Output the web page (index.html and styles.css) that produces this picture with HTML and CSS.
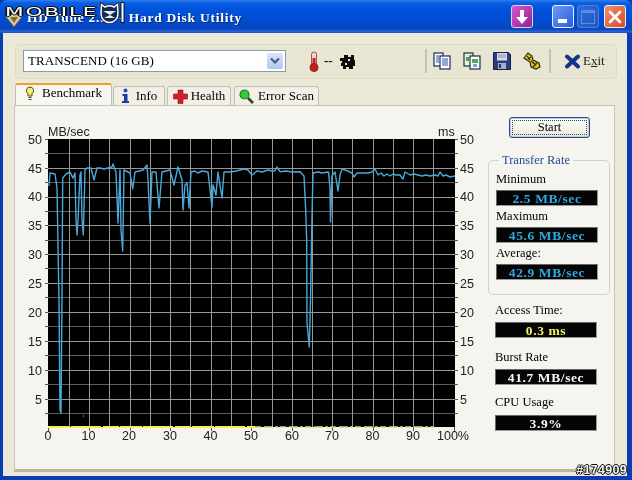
FILE: index.html
```html
<!DOCTYPE html>
<html lang="en">
<head>
<meta charset="utf-8">
<title>HD Tune</title>
<link rel="stylesheet" href="styles.css">
</head>
<body>
<div class="window">
  <header class="titlebar">
    <svg class="app-icon" width="18" height="16" viewBox="0 0 18 16"><path d="M1 5 9 1l8 4-8 10z" fill="#d8c8a0" stroke="#6a5a40"/><path d="M5 5h8l-4 6z" fill="#8a6a3a"/></svg>
    <span class="title-text">HD Tune 2.55 - Hard Disk Utility</span>
    <button class="tb-btn tb-pink"><svg width="18" height="18" viewBox="0 0 18 18"><path d="M7 2h4v7h4l-6 7-6-7h4z" fill="#fff"/></svg></button>
    <button class="tb-btn tb-min"><span class="min-dash"></span></button>
    <button class="tb-btn tb-max"><span class="max-box"></span></button>
    <button class="tb-btn tb-close"><svg width="14" height="14" viewBox="0 0 14 14"><path d="M2 2l10 10M12 2 2 12" stroke="#fff" stroke-width="2.6" stroke-linecap="round"/></svg></button>
  </header>

  <main class="client">
    <div class="toolbar">
      <div class="combo"><span class="combo-text">TRANSCEND (16 GB)</span><span class="combo-arrow"><svg width="10" height="8" viewBox="0 0 10 8"><path d="M1 1.5 5 5.5 9 1.5" fill="none" stroke="#3a5a8c" stroke-width="2"/></svg></span></div>
      <svg class="i-thermo" width="10" height="21" viewBox="0 0 10 21"><rect x="2.5" y="1" width="5" height="15" rx="2.5" fill="#f0d8d0" stroke="#a05050"/><rect x="3.5" y="7" width="3" height="9" fill="#c82020"/><circle cx="5" cy="16.5" r="4" fill="#c82020" stroke="#802020"/></svg>
      <span class="temp">--</span>
      <svg class="i-plug" width="15" height="15" viewBox="0 0 15 15"><path d="M0 4h4V1h4v2h3V1h3v5h1v6h-2v3H9v-2H6v2H3v-3H1V9h1V7H0z" fill="#0c0c0c"/><path d="M8 5h2v2H8zM5 9h2v2H5z" fill="#e8e8e0"/></svg>
      <span class="sep sep-a"></span>
      <svg class="i-tool i-first" width="18" height="18" viewBox="0 0 18 18"><rect x="1" y="1" width="9" height="13" fill="#fff" stroke="#1c2c58" stroke-width="1.200"/><rect x="7" y="4" width="10" height="13" fill="#fff" stroke="#1c2c58" stroke-width="1.200"/><path d="M3 4h3M3 6h3M3 8h3M3 10h3M9 7h6M9 9h6M9 11h6M9 13h6" stroke="#2a50a0"/></svg>
      <svg class="i-tool" width="18" height="18" viewBox="0 0 18 18"><rect x="1" y="1" width="9" height="13" fill="#e8f0e0" stroke="#1c2c40" stroke-width="1.200"/><rect x="7" y="4" width="10" height="13" fill="#fff" stroke="#1c2c40" stroke-width="1.200"/><path d="M3 5h3v4H3z" fill="#40a848"/><path d="M9 7h6v4H9z" fill="#48b048"/><path d="M10 12h4v3h-4z" fill="#70a8d0"/></svg>
      <svg class="i-tool" width="18" height="18" viewBox="0 0 18 18"><path d="M0.500 0.500h15l2 2v15H.500z" fill="#2c3c84" stroke="#141e50"/><rect x="4" y="1" width="10" height="7.500" fill="#d8dce8"/><path d="M5 3h8M5 5h8" stroke="#8a90a8"/><rect x="5" y="11" width="8" height="6" fill="#a8b0c0"/><rect x="6" y="12" width="2" height="4" fill="#28346c"/></svg>
      <svg class="i-tool" width="18" height="18" viewBox="0 0 18 18"><path d="M1 6 5 1l4 3 1 4 6 3 1 4-4 2-5-2-1-5z" fill="#d8c228" stroke="#2e2a10" stroke-width="1.200"/><path d="M4 4l3 4M8 9l5 4M5 7l3-2M10 15l4-4" stroke="#2e2a10" stroke-width="1.200"/></svg>
      <span class="sep sep-b"></span>
      <svg class="i-x" width="15" height="15" viewBox="0 0 15 15"><path d="M2 2.500l11 10M13 2.500l-11 10" stroke="#14348c" stroke-width="4" stroke-linecap="round"/></svg>
      <span class="exit">E<u>x</u>it</span>
    </div>

    <nav class="tabs">
      <div class="tab tab-active tab-bench"><svg width="10" height="15" viewBox="0 0 10 15"><path d="M5 1a3.600 3.600 0 0 1 2 6.600V10H3V7.600A3.600 3.600 0 0 1 5 1z" fill="#f4ec70" stroke="#4a4a20"/><path d="M3.500 11.500h3M3.500 13.500h3" stroke="#4a4a20" stroke-width="1.200"/></svg><span>Benchmark</span></div>
      <div class="tab tab-info"><svg width="9" height="16" viewBox="0 0 9 16"><circle cx="4.500" cy="2.500" r="2" fill="#2048b0"/><path d="M1.500 6h5v7h1.500v2H1v-2h2V8H1.500z" fill="#1c3ca8"/></svg><span>Info</span></div>
      <div class="tab tab-health"><svg width="15" height="15" viewBox="0 0 15 15"><path d="M5 1h5v4h4.500v5H10v4.500H5V10H.5V5H5z" fill="#d81c2c" stroke="#801018" stroke-width=".6"/></svg><span>Health</span></div>
      <div class="tab tab-scan"><svg width="15" height="15" viewBox="0 0 15 15"><circle cx="5.500" cy="5.500" r="4.500" fill="#38c838" stroke="#1c7c24" stroke-width="1.200"/><path d="M9 9l5 5" stroke="#38461c" stroke-width="2.600"/></svg><span>Error Scan</span></div>
    </nav>

    <section class="panel">
      <svg class="chart" width="473" height="342" viewBox="15 105 473 342">
        <rect x="48" y="139" width="407" height="288" fill="#000"/>
        <path class="grid-minor" d="M48 153.500H455M48 182.500H455M48 211.500H455M48 240.500H455M48 268.500H455M48 297.500H455M48 326.500H455M48 355.500H455M48 384.500H455M48 413.500H455"/>
        <path class="grid-major" d="M48 168.500H455M48 197.500H455M48 225.500H455M48 254.500H455M48 283.500H455M48 312.500H455M48 341.500H455M48 370.500H455M48 399.500H455"/>
        <path class="grid-major" d="M69.500 139V427M89.500 139V427M109.500 139V427M130.500 139V427M150.500 139V427M170.500 139V427M190.500 139V427M211.500 139V427M231.500 139V427M251.500 139V427M272.500 139V427M292.500 139V427M312.500 139V427M332.500 139V427M352.500 139V427M373.500 139V427M393.500 139V427M413.500 139V427M433.500 139V427"/>
        <path class="ticks" d="M45 139.500H48M45 153.500H48M45 168.500H48M45 182.500H48M45 197.500H48M45 211.500H48M45 225.500H48M45 240.500H48M45 254.500H48M45 268.500H48M45 283.500H48M45 297.500H48M45 312.500H48M45 326.500H48M45 341.500H48M45 355.500H48M45 370.500H48M45 384.500H48M45 399.500H48M45 413.500H48M455 139.500H458M455 153.500H458M455 168.500H458M455 182.500H458M455 197.500H458M455 211.500H458M455 225.500H458M455 240.500H458M455 254.500H458M455 268.500H458M455 283.500H458M455 297.500H458M455 312.500H458M455 326.500H458M455 341.500H458M455 355.500H458M455 370.500H458M455 384.500H458M455 399.500H458M455 413.500H458M48.500 427V431M89.500 427V431M130.500 427V431M170.500 427V431M211.500 427V431M251.500 427V431M292.500 427V431M332.500 427V431M373.500 427V431M413.500 427V431M454.500 427V431"/>
        <path class="yl-a" d="M48 427H255"/>
        <path class="yl-b" d="M255 427H434"/>
        <circle cx="83.500" cy="416" r=".7" fill="#aaa"/>
        <polyline class="curve" points="49,186 50,173 55,174 57,188 58,247 59,300 59.500,355 60,410 61,413 62,300 62.700,178 66,174 70,172 73,178 75,173 76,220 77,235 78,220 80,175 81,172 82,220 83.300,235 85,170 87,168 91,168 94,180 97,168 100,168 104,169 108,168 112,167 113,164 116,172 118,223 120,170 121,230 122.700,251 124,170 130,173 132.700,189 135,172 143,170 147,165 148,180 150,223 152,172 156,172 159,208 162,172 170,170 174,185 178,167 182,180 183,210 185,185 187,183 189,208 191,172 195,171 198,173 202,171 208,172 212,207 213,185 216,195 218,172 222,198 224,172 230,172 236,171 240,170 244,169 248,170 252,175 257,171 262,172 268,170 272,171 275,170.700 277,167 280,171.700 286,171 292,172 300,171.700 304,176 305.700,210 306.700,240 307,323 309.300,347 310.500,300 312,216 313,173 318,172 322,173 328,172 328.500,172 330,188 330.500,222 332,176 335,172 338,191 340,175 342,169 348,171 352,173 354,177 357,173 362,173 368,173 372,172 375,169 378,175 381,173 384,176 387,174 390,176 393,174 396,175 400,175 403,179 405,172 410,175 414,174 418,175 422,176 426,175 430,176 435,175 438,176 440,172 443,176 446,175 450,177 455,176"/>
        <g class="axis-l">
          <text x="42" y="144">50</text><text x="42" y="173">45</text><text x="42" y="201">40</text><text x="42" y="230">35</text><text x="42" y="259">30</text><text x="42" y="288">25</text><text x="42" y="317">20</text><text x="42" y="346">15</text><text x="42" y="375">10</text><text x="42" y="404">5</text>
        </g>
        <g class="axis-r">
          <text x="460" y="144">50</text><text x="460" y="173">45</text><text x="460" y="201">40</text><text x="460" y="230">35</text><text x="460" y="259">30</text><text x="460" y="288">25</text><text x="460" y="317">20</text><text x="460" y="346">15</text><text x="460" y="375">10</text><text x="460" y="404">5</text>
        </g>
        <g class="axis-b">
          <text x="48" y="440">0</text><text x="88.500" y="440">10</text><text x="129" y="440">20</text><text x="170" y="440">30</text><text x="210.500" y="440">40</text><text x="251" y="440">50</text><text x="292" y="440">60</text><text x="332" y="440">70</text><text x="372.500" y="440">80</text><text x="413" y="440">90</text><text x="453" y="440">100%</text>
        </g>
        <text class="unit" x="48" y="136">MB/sec</text>
        <text class="unit" x="438" y="136">ms</text>
      </svg>

      <aside class="side">
        <button class="start"><span class="start-in">Start</span></button>
        <fieldset class="rate">
          <legend>Transfer Rate</legend>
          <div class="lbl">Minimum</div><div class="val val-blue">2.5 MB/sec</div>
          <div class="lbl">Maximum</div><div class="val val-blue">45.6 MB/sec</div>
          <div class="lbl">Average:</div><div class="val val-blue">42.9 MB/sec</div>
        </fieldset>
        <div class="stat stat-access"><div class="lbl">Access Time:</div><div class="val val-yellow">0.3 ms</div></div>
        <div class="stat stat-burst"><div class="lbl">Burst Rate</div><div class="val val-white">41.7 MB/sec</div></div>
        <div class="stat stat-cpu"><div class="lbl">CPU Usage</div><div class="val val-white">3.9%</div></div>
      </aside>
    </section>
  </main>

  <div class="logo"><span class="logo-word">MOBILE</span><svg class="logo-mark" width="28" height="22" viewBox="0 0 28 22"><path d="M1.500 2.500 5 5a9 9 0 0 1 9 0l3.500-2.500L18 12a8.500 8.500 0 1 1-17 0z" fill="#0c1c3c" stroke="#111" stroke-width="3"/><path d="M1.500 2.500 5 5a9 9 0 0 1 9 0l3.500-2.500L18 12a8.500 8.500 0 1 1-17 0z" fill="#142a50" stroke="#fff" stroke-width="1.500"/><path d="M3 9h13l-6 4zM4 16h11l-5-3z" fill="#e8ecf4"/><path d="M21 .5h3v20h-3z" fill="#fff" stroke="#111"/></svg></div>
  <div class="stamp">#174909</div>
</div>
</body>
</html>
```
FILE: styles.css
```css
* { box-sizing: border-box; }
html, body { margin: 0; padding: 0; }
body { width: 632px; height: 480px; overflow: hidden; background: #0a3cb4; font-family: "Liberation Serif", serif; color: #000; }

.window { position: relative; width: 632px; height: 480px; display: flex; flex-direction: column; background: #0a3cb4; border-radius: 7px 7px 0 0; overflow: hidden; filter: blur(.3px); }

.titlebar { height: 33px; flex: none; display: flex; align-items: center; padding: 5px 0 0 5px; background: linear-gradient(#2f7fe8 0, #0a5ee6 3px, #0054dc 8px, #004cd0 20px, #0a46c0 29px, #2a6ad8 32px, #0a3cb4 33px); }
.app-icon { flex: none; margin-top: 2px; }
.title-text { margin-left: 4px; margin-top: -2px; font: bold 13.500px "Liberation Serif", serif; letter-spacing: .75px; color: #fff; text-shadow: 1px 1px 1px #0a2a70; white-space: nowrap; width: 484px; }
.tb-btn { flex: none; width: 22px; height: 23px; padding: 0; margin: -5px 0 0; display: flex; align-items: center; justify-content: center; border: 1px solid #e8f0ff; border-radius: 3px; }
.tb-pink { background: linear-gradient(135deg, #d858c8, #90209c); margin-right: 19px; border-color: #e0d0e8; }
.tb-min { background: linear-gradient(135deg, #6a9cf4, #2a5ce0); align-items: flex-end; justify-content: flex-start; padding: 0 0 4px 5px; margin-right: 3px; }
.min-dash { display: block; width: 9px; height: 4px; background: #fff; }
.tb-max { background: linear-gradient(135deg, #2f6ad8, #2456c4); border-color: #4a80e0; margin-right: 5px; }
.max-box { display: block; width: 14px; height: 14px; border: 1px solid #5a8ce4; border-top-width: 3px; }
.tb-close { background: linear-gradient(135deg, #f09070, #d84c20); }

.client { flex: none; height: 443px; margin: 0 5px 0 3px; padding: 11px 0 0 12px; background: #ece9d8; display: flex; flex-direction: column; }

.toolbar { flex: none; width: 602px; height: 35px; display: flex; align-items: center; padding: 0 0 1px 7px; background: #e8e5d3; border: 1px solid #dedbc8; border-radius: 4px; }
.combo { flex: none; width: 263px; height: 22px; display: flex; align-items: center; justify-content: space-between; padding: 0 2px 0 4px; background: #fff; border: 1px solid #8a9ab0; }
.combo-text { font-size: 13px; letter-spacing: .1px; }
.combo-arrow { width: 16px; height: 16px; display: flex; align-items: center; justify-content: center; background: linear-gradient(#d8e4fa, #b4c8ee); border-radius: 2px; }
.i-thermo { flex: none; margin-left: 23px; }
.temp { margin-left: 5px; width: 11px; font-size: 13px; font-weight: bold; }
.i-plug { flex: none; margin-left: 5px; }
.sep { flex: none; width: 2px; height: 24px; background: #c4c2b2; }
.sep-a { margin-left: 70px; }
.sep-b { margin-left: 8px; }
.i-tool { flex: none; margin-left: 12px; }
.i-first { margin-left: 6px; }
.i-x { flex: none; margin-left: 14px; }
.exit { margin-left: 3px; font-size: 13px; color: #222; }

.tabs { flex: none; height: 26px; display: flex; align-items: flex-end; }
.tab { height: 19px; display: flex; align-items: center; justify-content: center; background: #f2f0e6; border: 1px solid #b8c0c0; border-bottom: none; border-radius: 3px 3px 0 0; font-size: 13px; white-space: nowrap; }
.tab-active { height: 22px; background: #f7f6f1; border-top: 2px solid #e8a030; padding-bottom: 4px; }
.tab-bench { width: 97px; gap: 7px; }
.tab-info { width: 52px; gap: 6px; margin-left: 1px; }
.tab-health { width: 64px; gap: 3px; margin-left: 2px; }
.tab-scan { width: 85px; gap: 4px; margin-left: 3px; }

.panel { flex: none; width: 601px; height: 367px; margin-left: -1px; display: flex; align-items: flex-start; background: #f5f4ef; border: 1px solid #c4c4b4; border-bottom: 3px solid #b8b5a8; }
.chart { flex: none; display: block; margin-top: -1px; }
.grid-minor { stroke: #5c5c5c; stroke-width: 1; fill: none; }
.grid-major { stroke: #989892; stroke-width: 1; fill: none; }
.ticks { stroke: #555; stroke-width: 1; fill: none; }
.yl-a { stroke: #f2f24c; stroke-width: 2; stroke-dasharray: 22 1 30 2 16 1; fill: none; }
.yl-b { stroke: #d8d888; stroke-width: 1.500; stroke-dasharray: 6 3 9 2 3 2; fill: none; }
.curve { fill: none; stroke: #4aa8d8; stroke-width: 1.400; stroke-linejoin: round; }
.chart text { font-family: "Liberation Sans", sans-serif; font-size: 12.500px; fill: #222; }
.axis-l text { text-anchor: end; }
.axis-b text { text-anchor: middle; }

.side { flex: none; width: 122px; padding-top: 11px; }
.start { display: block; width: 81px; height: 21px; margin: 0 0 15px 21px; padding: 2px; background: linear-gradient(#fff, #e8e6da); border: 1px solid #2c4a80; border-radius: 3px; box-shadow: inset 0 0 0 1px #b8cce8; font: 12.500px "Liberation Serif", serif; color: #000; }
.start-in { display: block; border: 1px dotted #444; line-height: 13px; }
.rate { margin: 0; padding: 5px 0 11px 7px; width: 122px; border: 1px solid #d4d2c6; border-radius: 5px; }
.rate legend { margin-left: 3px; padding: 0 3px; font-size: 12.500px; line-height: 14px; color: #1c4a94; }
.lbl { height: 14px; line-height: 14px; font-size: 12.500px; margin-bottom: 4px; }
.val { width: 102px; height: 16px; line-height: 16px; background: #050505; border: 1px solid #888; border-color: #666 #999 #999 #666; text-align: center; font-weight: bold; font-size: 13.500px; letter-spacing: .6px; margin-bottom: 3px; }
.val-blue { color: #2ea8e0; }
.val-yellow { color: #f2f268; }
.val-white { color: #f8f8f8; }
.stat { padding-left: 7px; }
.stat .lbl { margin-bottom: 5px; }
.stat-access { margin-top: 8px; }
.stat-burst { margin-top: 12px; }
.stat-cpu { margin-top: 10px; }
.stat-cpu .lbl { margin-bottom: 6px; }

.logo { position: absolute; left: 5px; top: 2px; display: flex; align-items: flex-start; }
.logo-word { display: block; width: 95px; margin-top: 3px; font: 12px "DejaVu Sans", sans-serif; letter-spacing: 1px; color: #fff; transform: scaleX(1.800); transform-origin: left center; text-shadow: 1px 0 0 #111, -1px 0 0 #111, 0 1px 0 #111, 0 -1px 0 #111; }
.logo-mark { flex: none; }
.stamp { position: absolute; right: 5px; bottom: 3px; font: bold 12.500px "Liberation Sans", sans-serif; letter-spacing: .3px; color: #f4f4f4; text-shadow: 1px 0 0 #111, -1px 0 0 #111, 0 1px 0 #111, 0 -1px 0 #111; }
```
